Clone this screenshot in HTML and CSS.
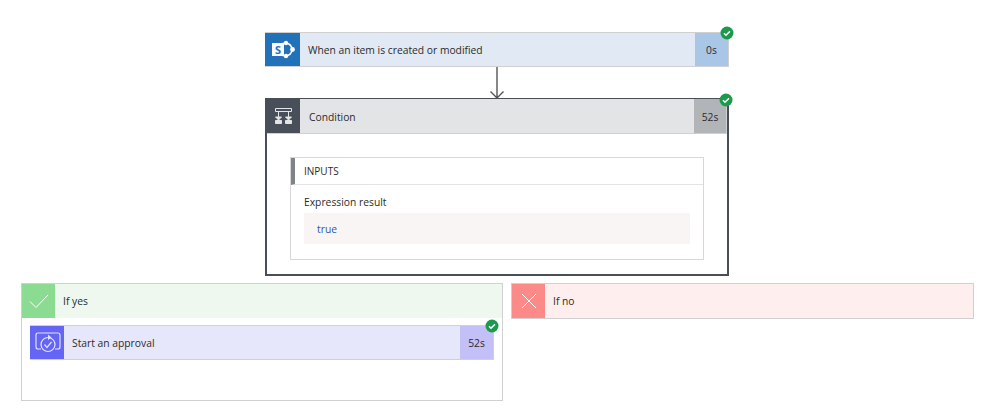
FILE: index.html
```html
<!DOCTYPE html>
<html lang="en">
<head>
    <meta charset="UTF-8">
    <title>Flow run</title>
    <link rel="stylesheet" href="styles.css">
</head>
<body>
    <div class="flow">
        <!-- Trigger -->
        <div class="card card-trigger">
            <div class="card-head">
                <span class="card-icon">
                    <svg width="35" height="33" viewBox="0 0 35 33">
                        <circle cx="20.500" cy="16.500" r="6.500" fill="none" stroke="#fff" stroke-width="1.600"/>
                        <circle cx="21" cy="10" r="2.200" fill="#fff"/>
                        <circle cx="27.500" cy="16.500" r="2.400" fill="#fff"/>
                        <circle cx="21" cy="23" r="2.200" fill="#fff"/>
                        <rect x="7" y="10" width="12" height="13" fill="#fff"/>
                        <text x="13" y="20.500" class="sp-letter">S</text>
                    </svg>
                </span>
                <span class="card-title">When an item is created or modified</span>
                <span class="card-time">0s</span>
            </div>
            <svg class="badge" width="14" height="14" viewBox="0 0 14 14"><circle cx="7" cy="7" r="6.500" fill="#1b9a4b"/><path d="M4 7.200l2 2 4-4" fill="none" stroke="#fff" stroke-width="1.600"/></svg>
        </div>

        <svg class="arrow" width="16" height="31" viewBox="0 0 16 31">
            <path d="M8 0v31M1.500 24.500L8 31l6.500-6.500" fill="none" stroke="#555" stroke-width="1.400"/>
        </svg>

        <!-- Condition -->
        <div class="card card-condition">
            <div class="card-head">
                <span class="card-icon">
                    <svg width="20" height="20" viewBox="0 0 20 20" fill="none" stroke="#e2e4e6" stroke-width="1">
                        <path d="M1.500 2.500h16v3h-16zM4.500 5.500v6M14.500 5.500v6"/>
                        <path d="M1.500 11h6l-3 3zM11.500 11h6l-3 3z" fill="#e2e4e6"/>
                        <path d="M1.500 14.500h6v3h-6zM11.500 14.500h6v3h-6z" fill="#e2e4e6"/>
                    </svg>
                </span>
                <span class="card-title">Condition</span>
                <span class="card-time">52s</span>
            </div>
            <div class="condition-body">
                <div class="inputs">
                    <div class="inputs-head">INPUTS</div>
                    <div class="inputs-body">
                        <div class="inputs-label">Expression result</div>
                        <div class="inputs-value">true</div>
                    </div>
                </div>
            </div>
            <svg class="badge" width="14" height="14" viewBox="0 0 14 14"><circle cx="7" cy="7" r="6.500" fill="#1b9a4b"/><path d="M4 7.200l2 2 4-4" fill="none" stroke="#fff" stroke-width="1.600"/></svg>
        </div>
    </div>

    <!-- Ветки условия -->
    <div class="branches">
        <div class="branch branch-yes">
            <div class="branch-head">
                <span class="branch-icon">
                    <svg width="24" height="24" viewBox="0 0 24 24"><path d="M3 12.500l6 6L21 6" fill="none" stroke="#fff" stroke-width="1"/></svg>
                </span>
                <span class="branch-title">If yes</span>
            </div>
            <div class="branch-body">
                <div class="card card-approval">
                    <div class="card-head">
                        <span class="card-icon">
                            <svg width="34" height="33" viewBox="0 0 34 33" fill="none" stroke="#e4e4ff" stroke-width="1.200">
                                <path d="M11 23H8q-2 0-2-2V9q0-2 2-2h20q2 0 2 2v12q0 2-2 2h-3"/>
                                <circle cx="18" cy="18.500" r="7"/>
                                <path d="M14.500 18.500l2.500 3 4.500-5.500"/>
                                <path d="M18 8.500l3.500 3-3.500 2.500z" fill="#e4e4ff" stroke="none"/>
                            </svg>
                        </span>
                        <span class="card-title">Start an approval</span>
                        <span class="card-time">52s</span>
                    </div>
                    <svg class="badge" width="14" height="14" viewBox="0 0 14 14"><circle cx="7" cy="7" r="6.500" fill="#1b9a4b"/><path d="M4 7.200l2 2 4-4" fill="none" stroke="#fff" stroke-width="1.600"/></svg>
                </div>
            </div>
        </div>
        <div class="branch branch-no">
            <div class="branch-head">
                <span class="branch-icon">
                    <svg width="24" height="24" viewBox="0 0 24 24"><path d="M5 5l14 14M19 5L5 19" fill="none" stroke="#fff" stroke-width="1"/></svg>
                </span>
                <span class="branch-title">If no</span>
            </div>
        </div>
    </div>
</body>
</html>
```

FILE: styles.css
```css
body {
    font-family: 'Open Sans', sans-serif;
    font-size: 10.3px;
    color: #2b2b2b;
    margin: 0;
    padding-top: 32px;
    background-color: #fff;
}

.flow {
    display: flex;
    flex-direction: column;
    align-items: center;
    width: 464px;
    margin-left: 265px;
}

.card {
    position: relative;
    box-sizing: border-box;
    width: 100%;
}

.card-head {
    display: flex;
    align-items: stretch;
    box-sizing: border-box;
    height: 35px;
    border: 1px solid #d0d0d0;
    border-left: none;
}

.card-icon {
    display: flex;
    align-items: center;
    justify-content: center;
    width: 35px;
    flex-shrink: 0;
}

.card-title {
    flex: 1;
    padding-left: 8px;
    line-height: 34px;
}

.card-time {
    width: 33px;
    text-align: center;
    line-height: 34px;
}

.badge {
    position: absolute;
    top: -6px;
    right: -5px;
}

.sp-letter {
    font-family: 'Open Sans', sans-serif;
    font-size: 11px;
    font-weight: bold;
    fill: #2272b9;
    text-anchor: middle;
}

.card-trigger .card-head { background: #e0e9f4; }
.card-trigger .card-icon { background: #2272b9; }
.card-trigger .card-time { background: #a9c6e6; }

.arrow {
    display: block;
    flex-shrink: 0;
}

.card-condition {
    height: 178px;
    border: 2px solid #484f58;
}

.card-condition .card-head {
    height: 35px;
    margin-top: -1px;
    background: #e3e4e6;
    border-top: none;
}
.card-condition .card-icon { background: #484f58; width: 33px; }
.card-condition .card-time { background: #b2b5b8; }
.card-condition .card-title { padding-left: 9px; line-height: 36px; }
.card-condition .card-time { line-height: 36px; width: 32px; }
.card-condition .badge { top: -7px; right: -6px; }

.condition-body {
    padding: 23px 23px 0;
}

.inputs {
    border: 1px solid #d8d8d8;
}

.inputs-head {
    height: 26px;
    line-height: 27px;
    padding-left: 9px;
    font-size: 10px;
    border-left: 4px solid #7f8489;
    border-bottom: 1px solid #e4e4e4;
}

.inputs-body {
    padding: 9px 13px 15px;
}

.inputs-label {
    height: 19px;
    line-height: 17px;
}

.inputs-value {
    height: 31px;
    line-height: 32px;
    padding-left: 13px;
    color: #2e5aa8;
    background: #faf5f5;
}

.branches {
    display: flex;
    align-items: flex-start;
    gap: 8px;
    margin: 7px 0 0 21px;
}

.branch {
    box-sizing: border-box;
    border: 1px solid #d0d0d0;
}

.branch-yes {
    width: 482px;
    height: 118px;
}

.branch-no {
    width: 463px;
    height: 36px;
}

.branch-head {
    display: flex;
    height: 34px;
}

.branch-icon {
    display: flex;
    align-items: center;
    justify-content: center;
    width: 33px;
}

.branch-title {
    padding-left: 8px;
    line-height: 35px;
}

.branch-yes .branch-head { background: #eef8ee; }
.branch-yes .branch-icon { background: #8cdb92; }
.branch-no .branch-head { background: #feefee; }
.branch-no .branch-icon { background: #fb8a88; }

.branch-body {
    padding: 7px 8px 0 8px;
}

.card-approval .card-head { background: #e6e7fa; }
.card-approval .card-icon { background: #6464f5; width: 34px; }
.card-approval .card-time { background: #c2c0f7; }
```
